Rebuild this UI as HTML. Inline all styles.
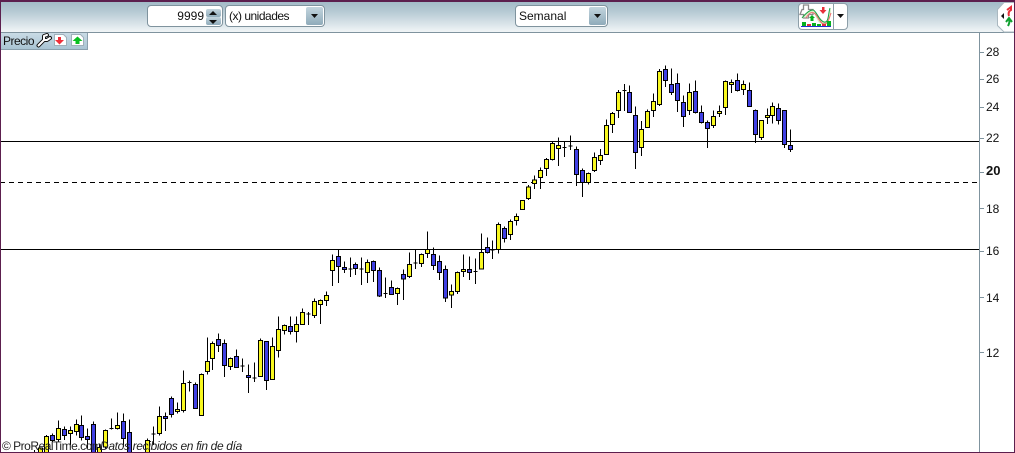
<!DOCTYPE html>
<html><head><meta charset="utf-8"><style>
html,body{margin:0;padding:0;background:#fff}
#r{position:relative;width:1015px;height:453px;overflow:hidden;background:#fff;font-family:"Liberation Sans",sans-serif;font-size:12px;color:#111}
#r div{position:absolute;box-sizing:border-box}
.bar{left:0;top:0;width:1015px;height:33px;background:linear-gradient(#9fb8c5,#b5c9d3 35%,#f1f5f7);border-bottom:1px solid #7f939e}
.f{background:#fff;border:1px solid #7f939e;border-radius:4px;height:22px;top:5px;line-height:20px;white-space:nowrap}
.b{background:linear-gradient(#c3d5de,#8fabba);border-radius:2px}
.t{left:986px;line-height:14px}
</style></head><body><div id="r">
<svg style="position:absolute;left:0;top:0" width="1015" height="453" shape-rendering="crispEdges" fill="none" stroke="#000" stroke-width="1">
<path d="M0 141.5H979M0 249.5H979"/>
<path d="M0 182.5H979" stroke-dasharray="5 4"/>
<g stroke-width="3">
<g transform="translate(0.167,320.167) scale(.33333)">
<path d="M103 390V400M97 378h12M139 345V400M157 340V365M175 301V365M193 319V360M211 319V375M229 298V346M244 286V361M262 325V385M280 304V400M298 370V400M316 328V385M334 295V328M328 325h12M352 277V328M370 280V380M388 298V400M442 355V400M460 319V375M454 341h12M478 259V346M496 277V333M514 229V292M532 247V280M550 151V277M568 181V214M562 187h12M586 187V265M604 160V286M622 52V163M637 64V150M655 40V95M673 58V170M691 112V150M709 88V142M727 115V155M721 137h12M745 133V218"/>
<path fill="#f8f820" d="M115 383h12v16h-12zM133 349h12v50h-12zM169 325h12v33h-12zM205 331h12v9h-12zM223 313h12v21h-12zM292 382h12v17h-12zM310 331h12v49h-12zM346 316h12v9h-12zM436 361h12v38h-12zM472 289h12v51h-12zM526 268h12v6h-12zM544 190h12v81h-12zM598 163h12v123h-12zM616 124h12v30h-12zM631 70h12v45h-12zM685 115h12v24h-12z"/>
<path fill="#4040e4" d="M151 346h12v15h-12zM187 328h12v18h-12zM238 316h12v36h-12zM256 349h12v9h-12zM274 313h12v87h-12zM364 304h12v51h-12zM382 337h12v60h-12zM490 289h12v6h-12zM508 235h12v48h-12zM580 193h12v72h-12zM649 58h12v18h-12zM667 70h12v66h-12zM703 109h12v33h-12zM739 166h12v6h-12z"/>
</g>
<g transform="translate(130.167,310.167) scale(.33333)">
<path d="M373 157V215M367 203h12M391 85V199M409 94V239M427 82V208M445 19V142M463 43V73M481 19V73M499 19V97"/>
<path fill="#f8f820" d="M385 91h12v108h-12zM421 109h12v99h-12zM439 58h12v63h-12zM457 46h12v15h-12zM493 43h12v21h-12z"/>
<path fill="#4040e4" d="M403 94h12v117h-12zM475 49h12v15h-12z"/>
</g>
<g transform="translate(250.167,210.167) scale(.33333)">
<path d="M157 295V345M175 305V345M169 311h12M193 265V323M211 268V341M229 244V287M247 133V227M265 118V218M283 154V188M301 142V200M295 176h12M316 157V194M334 142V224M328 176h12M352 148V218M370 151V215M388 172V260M406 202V263M400 250h12M424 211V254M442 232V284M460 178V269M478 127V203M496 118V176M490 158h12M514 130V170M532 64V143M550 112V179M568 136V209M586 166V275M604 223V293M622 184V251M640 133V200M658 139V209M676 145V221M670 184h12M694 70V176M712 82V130M727 91V146M721 120h12M745 37V130M763 49V97"/>
<path fill="#f8f820" d="M151 307h12v36h-12zM187 274h12v42h-12zM205 271h12v12h-12zM223 256h12v15h-12zM241 151h12v30h-12zM346 157h12v30h-12zM436 235h12v15h-12zM472 163h12v36h-12zM508 133h12v27h-12zM526 118h12v12h-12zM598 244h12v10h-12zM616 187h12v57h-12zM634 178h12v6h-12zM688 127h12v49h-12zM739 43h12v75h-12z"/>
<path fill="#4040e4" d="M259 139h12v30h-12zM277 172h12v6h-12zM310 163h12v12h-12zM364 154h12v27h-12zM382 181h12v76h-12zM418 232h12v21h-12zM454 193h12v13h-12zM544 133h12v33h-12zM562 154h12v33h-12zM580 178h12v85h-12zM652 178h12v9h-12zM706 112h12v15h-12zM757 55h12v30h-12z"/>
</g>
<g transform="translate(490.167,190.167) scale(.33333)">
<path d="M61 88V150M79 70V106"/>
<path fill="#f8f820" d="M55 94h12v39h-12zM73 79h12v12h-12z"/>
</g>
<g transform="translate(480.167,60.167) scale(.33333)">
<path d="M145 375V419M163 346V386M181 322V386M199 294V347M217 245V301M235 232V317M253 245V290M247 262h12M271 226V269M265 258h12M289 259V377M307 325V410M325 337V373M343 277V335M361 267V314M379 178V284M397 156V218M415 89V173M433 72V152M427 91h12M448 76V157M466 139V326M484 183V287M502 148V203M520 100V170M538 26V137M556 16V80M574 25V104M592 40V155M610 106V200M628 70V164M646 61V160M664 136V190M682 181V263M700 151V203M718 136V171M736 61V165M754 58V98M772 40V94M790 61V104M808 67V139M826 148V248M844 181V239M862 145V192M877 127V190M895 130V193M913 151V263M931 208V275"/>
<path fill="#f8f820" d="M121 421h12v27h-12zM139 380h12v35h-12zM157 359h12v11h-12zM175 331h12v21h-12zM193 298h12v27h-12zM211 250h12v48h-12zM229 256h12v9h-12zM319 340h12v27h-12zM337 292h12v39h-12zM355 286h12v15h-12zM373 196h12v87h-12zM391 160h12v33h-12zM409 97h12v54h-12zM478 208h12v54h-12zM496 154h12v48h-12zM514 124h12v27h-12zM532 34h12v99h-12zM622 97h12v54h-12zM694 169h12v27h-12zM712 154h12v6h-12zM730 64h12v78h-12zM748 67h12v6h-12zM784 73h12v15h-12zM838 181h12v51h-12zM856 166h12v6h-12zM871 139h12v27h-12z"/>
<path fill="#4040e4" d="M283 268h12v75h-12zM301 331h12v36h-12zM442 97h12v60h-12zM460 166h12v111h-12zM550 28h12v33h-12zM568 73h12v24h-12zM586 70h12v51h-12zM604 127h12v42h-12zM640 94h12v63h-12zM658 157h12v30h-12zM676 187h12v18h-12zM766 61h12v30h-12zM802 91h12v48h-12zM820 151h12v72h-12zM889 145h12v36h-12zM907 151h12v102h-12zM925 256h12v12h-12z"/>
</g>
</g>
<path stroke="#7f939e" d="M979.5 33V453M980 52.500h4M980 79.500h4M980 107.500h4M980 138.500h4M980 172.500h4M980 208.500h4M980 251.500h4M980 297.500h4M980 352.500h4"/>
</svg>
<div class="bar"></div>
<div class="f" style="left:147px;width:76px;text-align:right;padding-right:18px">9999</div>
<div class="b" style="left:206px;top:9px;width:15px;height:8px"></div>
<div class="b" style="left:206px;top:17px;width:15px;height:8px"></div>
<div class="f" style="left:225px;width:100px;padding-left:3px;letter-spacing:-.5px">(x) unidades</div>
<div class="b" style="left:306px;top:7px;width:17px;height:18px"></div>
<div class="f" style="left:515px;width:93px;padding-left:3px">Semanal</div>
<div class="b" style="left:589px;top:7px;width:17px;height:18px"></div>
<div style="left:798px;top:3px;width:50px;height:27px;background:#fff;border:1px solid #8d9fa9;border-radius:4px"></div>
<div style="left:0;top:33px;width:88px;height:17px;background:linear-gradient(#c9dbe5,#a9c4d3);border-right:1px solid #8aa0ad;border-bottom:1px solid #8aa0ad;line-height:16px;padding-left:3px;letter-spacing:-.5px">Precio</div>
<svg style="position:absolute;left:0;top:0" width="1015" height="60" fill="none">
<g fill="#111"><path d="M209 15l4-4 4 4zM209 20l4 4 4-4zM311 14h7l-3.500 4zM594 14h7l-3.500 4zM837 14h7l-3.500 4z"/></g>
<path d="M833.500 4V29" stroke="#8d9fa9"/>
<path d="M38.500 45.500L44 40M44 40L44 36L47 35M44 40L47 40L50 38" stroke="#111" stroke-width="4" stroke-linecap="round" stroke-linejoin="round"/>
<path d="M38.500 45.500L44 40M44 40L44 36L47 35M44 40L47 40L50 38" stroke="#fff" stroke-width="2" stroke-linecap="round" stroke-linejoin="round"/>
<path d="M54.500 34.500h9l3 3v8h-12z" fill="#fff" stroke="#9fb0ba"/>
<path d="M58 37h3v3h3l-4.500 4.500-4.500-4.500h3z" fill="#f0303a"/>
<path d="M71.500 34.500h9l3 3v8h-12z" fill="#fff" stroke="#9fb0ba"/>
<path d="M77.500 36.500l5 4.500h-3v3h-4v-3h-3z" fill="#08c020"/>
<path d="M802 9.500h1.500v-4.500h5v4.500h4.500v5h-4.500v3.500h-5v-3.500h-3.500z" fill="#fff" stroke="#8a8a8a" stroke-width="1.300"/>
<path d="M802 18c4-5 8-8 11-8s6 11 11 12 4-8 7-14c0 8-1 16-8 16s-7-12-11-11-5 4-10 5z" fill="#d6f0c8"/>
<path d="M802 18c4-5 8-8 11-8s6 11 11 12 4-8 6-14" stroke="#19a040"/>
<path d="M806 18c3-5 5-6 8-5s6 11 10 11 5-5 7-11" stroke="#ef6a6a"/>
<path d="M812 15l3 3h-1.500v3h-3v-3h-1.500z" fill="#08b020"/>
<path d="M822 7h2.500v3h2l-3.500 4-3.500-4h2.500z" fill="#e8303a"/>
<g fill="#08b020"><rect x="802" y="22" width="4" height="4"/><rect x="812" y="23" width="4" height="3"/><rect x="817" y="24" width="4" height="2"/><rect x="827" y="21" width="4" height="5"/></g>
<g fill="#e03040"><rect x="807" y="24" width="4" height="2"/><rect x="822" y="24" width="4" height="2"/></g>
<path d="M801 26.500H831" stroke="#2030d0"/>
<path d="M1015 2.500h-11l-6.500 7v16l6.500 6.500h11z" fill="#fff" stroke="#aab8c0"/>
<path d="M1004 13v6l-3-3z" fill="#111"/>
<path d="M1009 16c-1-3 0-5 2-6v-3l-4 3" stroke="#e8303a" stroke-width="2"/>
<path d="M1009 19c1 3 0 5-1 7M1006 22l3-4 3 4" stroke="#10a030" stroke-width="2"/>
</svg>
<div class="t" style="top:45px">28</div>
<div class="t" style="top:72px">26</div>
<div class="t" style="top:100px">24</div>
<div class="t" style="top:131px">22</div>
<div class="t" style="top:164px;font-size:13px;font-weight:bold">20</div>
<div class="t" style="top:202px">18</div>
<div class="t" style="top:244px">16</div>
<div class="t" style="top:291px">14</div>
<div class="t" style="top:346px">12</div>
<div style="left:2px;top:439px;line-height:14px;white-space:nowrap;color:#222;letter-spacing:-.5px">© ProRealTime.com</div>
<div style="left:100px;top:439px;line-height:14px;white-space:nowrap;font-style:italic;color:#222;letter-spacing:-.35px">Datos recibidos en fin de día</div>
<div style="left:0;top:0;width:1015px;height:2px;background:#5c1f4e"></div>
<div style="left:0;top:0;width:1px;height:453px;background:#5c1f4e"></div>
<div style="left:1014px;top:0;width:1px;height:453px;background:#5c1f4e"></div>
<div style="left:0;top:452px;width:1015px;height:1px;background:#5c1f4e"></div>
</div></body></html>
